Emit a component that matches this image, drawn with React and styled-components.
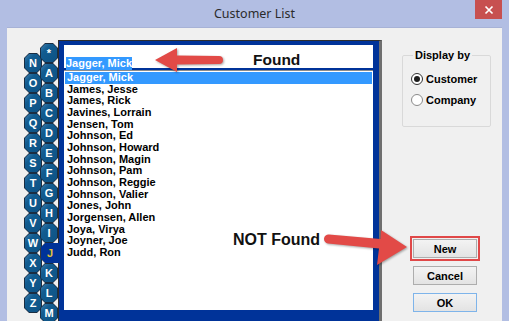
import React from 'react';
import styled, { createGlobalStyle } from 'styled-components';

const GlobalStyle = createGlobalStyle`
  html, body {
    margin: 0;
    padding: 0;
    background: #b2bee3;
  }
  body {
    font-family: "Liberation Sans", Arial, sans-serif;
  }
`;

const Window = styled.div`
  position: relative;
  width: 509px;
  height: 321px;
  overflow: hidden;
  box-sizing: border-box;
  padding: 0 7px;
  background: #b2bee3;
  display: flex;
  flex-direction: column;
`;

const TitleBar = styled.div`
  height: 27px;
  display: grid;
  grid-template-columns: 1fr auto 1fr;
  align-items: start;
`;

const Title = styled.div`
  grid-column: 2;
  font-family: "Noto Sans", sans-serif;
  font-size: 12.5px;
  line-height: 28px;
  color: #2b2b2b;
`;

const CloseButton = styled.div`
  grid-column: 3;
  justify-self: end;
  width: 27px;
  height: 19px;
  background: #c75050;
  display: flex;
  align-items: center;
  justify-content: center;
`;

const Client = styled.div`
  flex: 1;
  background: #f0f0f0;
  border-top: 1px solid #a7b2d6;
  display: flex;
  align-items: flex-start;
  padding: 12px 0 0 17px;
`;

const TabStrip = styled.div`
  display: flex;
  margin-top: 3px;
  width: 34px;
`;

const TabColumn = styled.div`
  display: flex;
  flex-direction: column;
  width: 18px;
  padding-top: ${({ $offset }) => $offset}px;
  margin-left: ${({ $shift }) => $shift}px;
`;

const octagon = (c) =>
  `polygon(${c}px 0, calc(100% - ${c}px) 0, 100% ${c}px, 100% calc(100% - ${c}px), calc(100% - ${c}px) 100%, ${c}px 100%, 0 calc(100% - ${c}px), 0 ${c}px)`;

const Tab = styled.div`
  position: relative;
  z-index: ${({ $active }) => ($active ? 3 : 1)};
  flex: none;
  width: ${({ $active }) => ($active ? 20 : 18)}px;
  height: 20px;
  display: flex;
  align-items: center;
  justify-content: center;
  font: bold 11px "Liberation Sans", Arial, sans-serif;
  color: ${({ $active }) => ($active ? '#e3c23a' : '#ffffff')};
  background: ${({ $active }) => ($active ? '#3a3a3a' : '#1a2d42')};
  clip-path: ${({ $active }) =>
    $active
      ? 'polygon(5px 0, 100% 0, 100% 100%, 5px 100%, 0 calc(100% - 5px), 0 5px)'
      : octagon(5)};

  &::before {
    content: '';
    position: absolute;
    inset: ${({ $active }) => ($active ? '0 0 0 1px' : '1px')};
    z-index: -1;
    background: ${({ $active }) =>
      $active ? '#003399' : 'linear-gradient(135deg, #3f7fae 0%, #125c90 30%, #0d5284 100%)'};
    clip-path: ${({ $active }) =>
      $active
        ? 'polygon(4px 0, 100% 0, 100% 100%, 4px 100%, 0 calc(100% - 4px), 0 4px)'
        : octagon(4)};
  }
`;

const Panel = styled.div`
  flex: none;
  width: 324px;
  height: 300px;
  box-sizing: border-box;
  background: #003399;
  border-top: 1px solid #2e2e2e;
  border-left: 1px solid #2e2e2e;
  border-right: 3px solid #6f6f6f;
  padding: 4px 6px 0 5px;
  display: flex;
  flex-direction: column;
  gap: 2px;
`;

const SearchBox = styled.div`
  height: 23px;
  box-sizing: border-box;
  background: #ffffff;
  padding: 8px 0 0 2px;
`;

const Selected = styled.span`
  display: inline-block;
  background: #3399ff;
  color: #ffffff;
  font: bold 11px/13px "Liberation Sans", Arial, sans-serif;
`;

const List = styled.div`
  height: 240px;
  box-sizing: border-box;
  background: #ffffff;
  border-top: 1px solid #8c8c8c;
  padding: 1px;
`;

const Row = styled.div`
  height: 11.67px;
  padding-left: 2px;
  font: bold 11px/11.67px "Liberation Sans", Arial, sans-serif;
  color: ${({ $selected }) => ($selected ? '#ffffff' : '#000000')};
  background: ${({ $selected }) => ($selected ? '#3399ff' : 'transparent')};
  white-space: nowrap;
`;

const Side = styled.div`
  margin-left: 20px;
  display: flex;
  flex-direction: column;
  align-items: flex-start;
`;

const GroupBox = styled.fieldset`
  margin: 9px 0 0 0;
  width: 89px;
  box-sizing: border-box;
  border: 1px solid #d9d9d9;
  border-radius: 2px;
  padding: 10px 0 19px 8px;
`;

const Legend = styled.legend`
  margin-left: 2px;
  padding: 0 2px;
  font: bold 11px/13px "Liberation Sans", Arial, sans-serif;
  color: #000;
`;

const RadioRow = styled.div`
  display: flex;
  align-items: center;
  gap: 3px;
  height: 14px;
  margin-top: ${({ $first }) => ($first ? 0 : 7)}px;
  font: bold 11px/14px "Liberation Sans", Arial, sans-serif;
  color: #000;
`;

const RadioDot = styled.span`
  width: 12px;
  height: 12px;
  box-sizing: border-box;
  border-radius: 50%;
  border: 1px solid ${({ $checked }) => ($checked ? '#333333' : '#8a8a8a')};
  background: #ffffff;
  display: flex;
  align-items: center;
  justify-content: center;

  &::after {
    content: '';
    width: 6px;
    height: 6px;
    border-radius: 50%;
    background: ${({ $checked }) => ($checked ? '#1c1c1c' : 'transparent')};
  }
`;

const Buttons = styled.div`
  margin: 109px 0 0 11px;
  display: flex;
  flex-direction: column;
  align-items: flex-start;
  gap: 5px;
`;

const Highlight = styled.div`
  margin-left: -3px;
  border: 2px solid #e04848;
  padding: 1px;
`;

const Button = styled.div`
  width: 64px;
  height: 19px;
  box-sizing: border-box;
  border: 1px solid ${({ $default }) => ($default ? '#7eb4ea' : '#adadad')};
  background: linear-gradient(#f3f3f3, #e3e3e3);
  display: flex;
  align-items: center;
  justify-content: center;
  font: bold 11px "Liberation Sans", Arial, sans-serif;
  color: #000;
  margin-top: ${({ $gap }) => $gap || 0}px;
`;

const Overlay = styled.svg`
  position: absolute;
  left: 0;
  top: 0;
  pointer-events: none;
  filter: drop-shadow(1px 1.5px 1px rgba(0, 0, 0, 0.35));
`;

const Note = styled.div`
  position: absolute;
  left: ${({ $x }) => $x}px;
  top: ${({ $y }) => $y}px;
  font: bold ${({ $size }) => $size}px/16px "Liberation Sans", Arial, sans-serif;
  color: #111;
  white-space: nowrap;
`;

const rightTabs = ['*', 'A', 'B', 'C', 'D', 'E', 'F', 'G', 'H', 'I', 'J', 'K', 'L', 'M'];
const leftTabs = ['N', 'O', 'P', 'Q', 'R', 'S', 'T', 'U', 'V', 'W', 'X', 'Y', 'Z'];

const customers = [
  'Jagger, Mick',
  'James, Jesse',
  'James, Rick',
  'Javines, Lorrain',
  'Jensen, Tom',
  'Johnson, Ed',
  'Johnson, Howard',
  'Johnson, Magin',
  'Johnson, Pam',
  'Johnson, Reggie',
  'Johnson, Valier',
  'Jones, John',
  'Jorgensen, Allen',
  'Joya, Virya',
  'Joyner, Joe',
  'Judd, Ron',
];

const App = () => (
  <>
    <GlobalStyle />
    <Window>
      <TitleBar>
        <Title>Customer List</Title>
        <CloseButton>
          <svg width="10" height="10" viewBox="0 0 10 10">
            <path d="M1.5 1.5 L8.5 8.5 M8.5 1.5 L1.5 8.5" stroke="#fff" strokeWidth="1.7" />
          </svg>
        </CloseButton>
      </TitleBar>
      <Client>
        <TabStrip>
          <TabColumn $offset={10} $shift={0}>
            {leftTabs.map((t) => (
              <Tab key={t}>{t}</Tab>
            ))}
          </TabColumn>
          <TabColumn $offset={0} $shift={-2}>
            {rightTabs.map((t) => (
              <Tab key={t} $active={t === 'J'}>{t}</Tab>
            ))}
          </TabColumn>
        </TabStrip>
        <Panel>
          <SearchBox>
            <Selected>Jagger, Mick</Selected>
          </SearchBox>
          <List>
            {customers.map((c, i) => (
              <Row key={c} $selected={i === 0}>{c}</Row>
            ))}
          </List>
        </Panel>
        <Side>
          <GroupBox>
            <Legend>Display by</Legend>
            <RadioRow $first>
              <RadioDot $checked />
              Customer
            </RadioRow>
            <RadioRow>
              <RadioDot />
              Company
            </RadioRow>
          </GroupBox>
          <Buttons>
            <Highlight>
              <Button>New</Button>
            </Highlight>
            <Button>Cancel</Button>
            <Button $default $gap={3}>OK</Button>
          </Buttons>
        </Side>
      </Client>

      <Overlay width="509" height="321" viewBox="0 0 509 321">
        <path d="M155 60 L177 48 L177 55.5 L219 56 A4 4 0 0 1 219 64 L177 64.5 L177 72 Z" fill="#e24a47" />
        <path d="M407 247 L381 230 L380.5 239 L329 234.5 A4.5 4.5 0 0 0 328 243.5 L379 248.5 L377 265 Z" fill="#e24a47" />
      </Overlay>
      <Note $x={253} $y={52} $size={15.5}>Found</Note>
      <Note $x={233} $y={232} $size={16}>NOT Found</Note>
    </Window>
  </>
);

export default App;
